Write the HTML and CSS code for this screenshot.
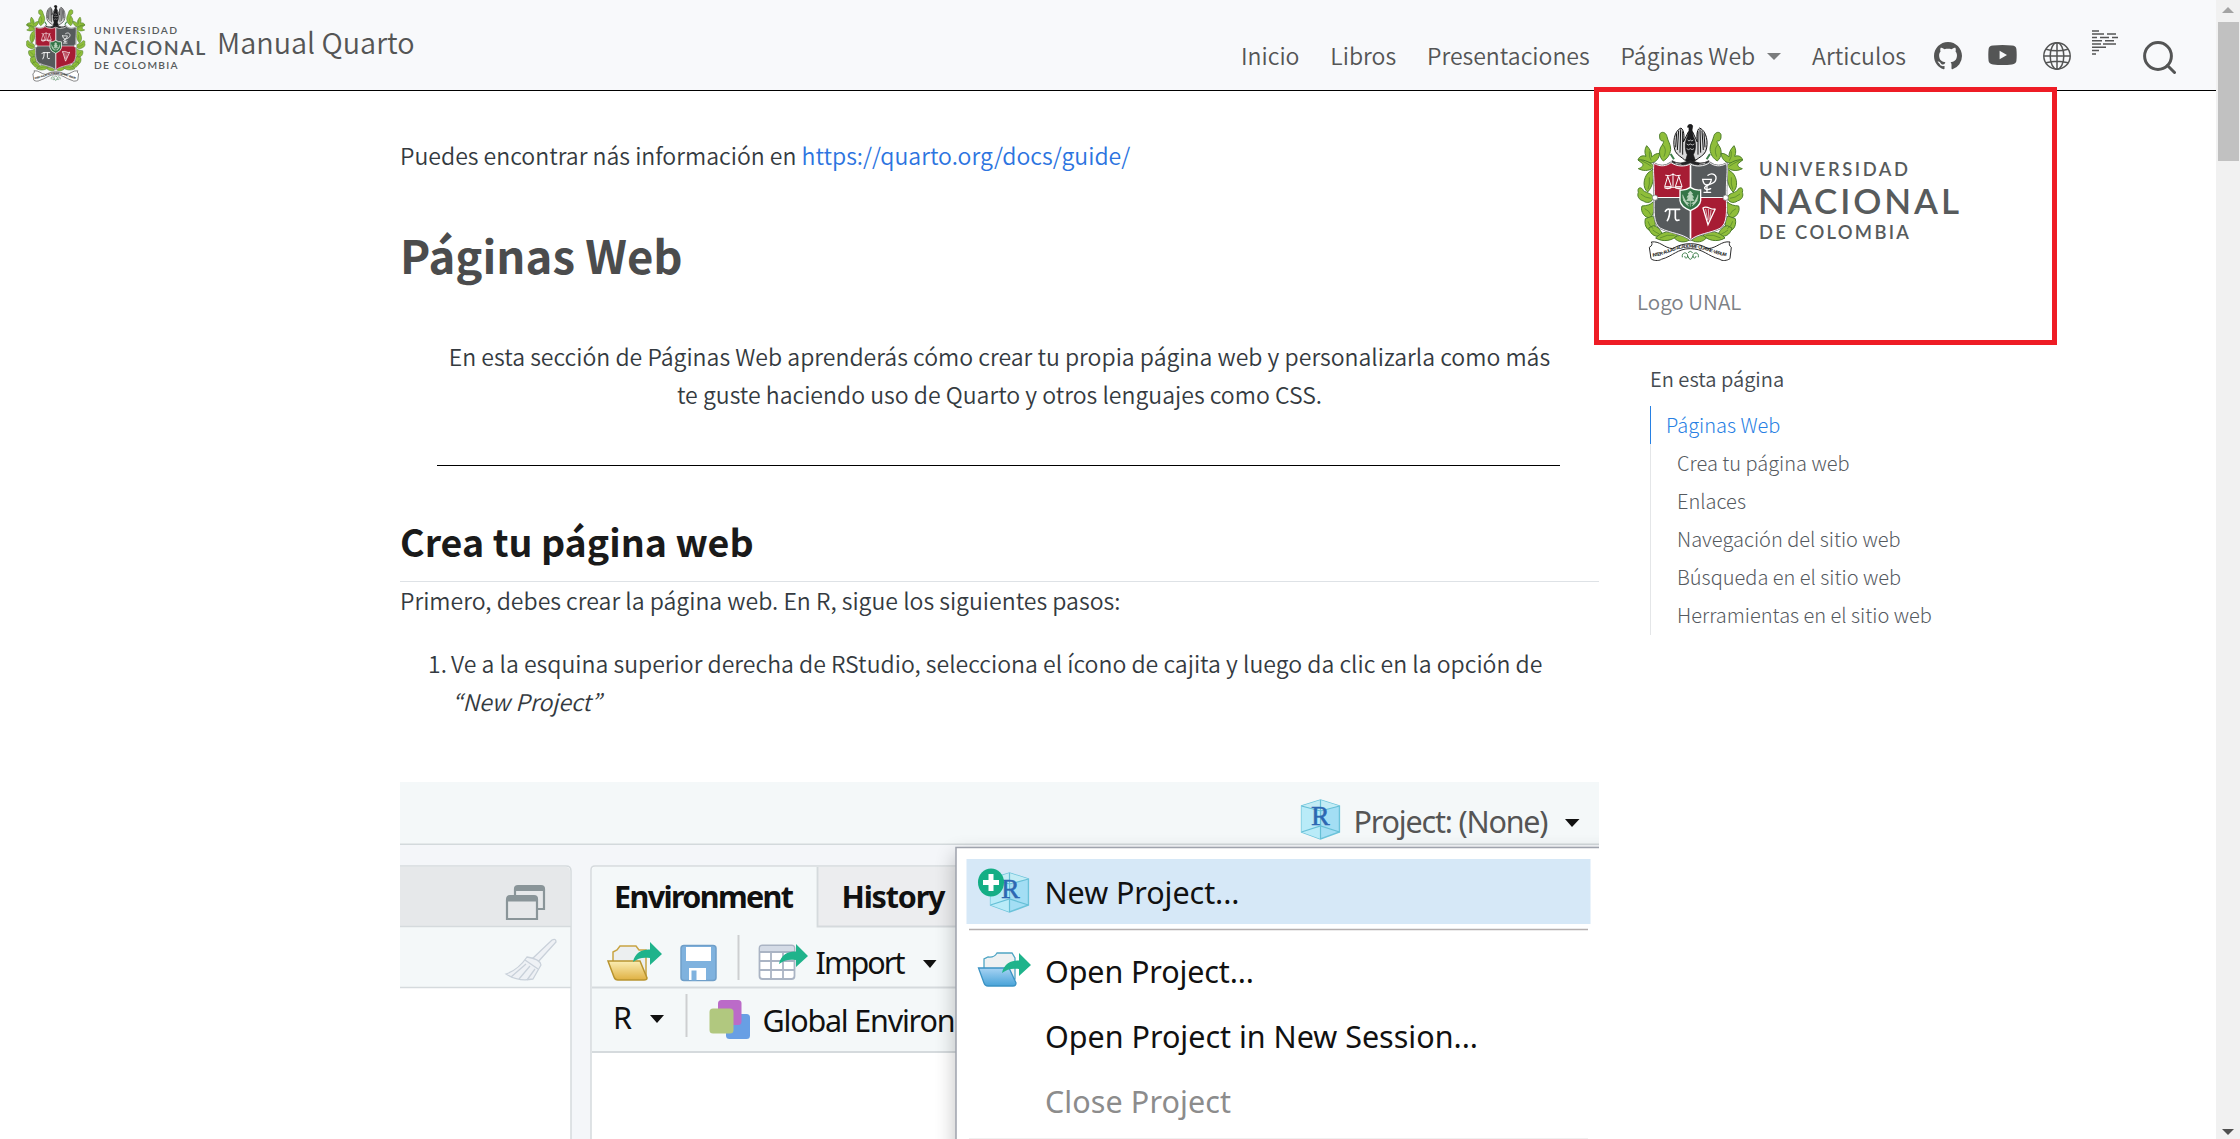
FILE: index.html
```html
<!DOCTYPE html>
<html lang="es">
<head>
<meta charset="utf-8">
<title>Manual Quarto</title>
<link rel="stylesheet" href="styles.css">
</head>
<body>
<svg class="defs" width="0" height="0" aria-hidden="true">
  <defs>
    <clipPath id="shield-clip"><path d="M102 160C122 172 140 168 153 158C170 170 195 171 211 162C227 171 252 170 269 158C282 168 300 172 320 160C324 185 318 205 319 262C320 305 322 342 300 355C270 370 235 370 211 390C187 370 152 370 122 355C100 342 102 305 103 262C104 205 98 185 102 160Z"/></clipPath>
    <g id="leaves" fill="#8fbe3a" stroke="#4d7d2b" stroke-width="3" stroke-linejoin="round">
      <path d="M119 78C117 64 137 62 141 80C144 95 152 102 152 118C150 136 142 145 130 153C116 140 115 120 126 106C132 97 132 90 128 93C122 94 118 86 119 78Z"/>
      <path d="M80 107C91 118 96 130 95 141C103 133 110 130 119 130C117 146 108 156 95 159C80 160 66 148 54 150C57 140 66 135 78 139C73 128 74 117 80 107Z"/>
      <path d="M54 150C75 147 96 160 103 171C86 186 66 182 55 176C65 173 71 168 68 161Z"/>
      <path d="M101 176C102 202 100 228 83 246C67 234 70 204 84 189Z"/>
      <path d="M55 247C50 230 66 230 70 242C82 250 97 250 99 263C98 278 80 281 70 273C55 269 51 257 55 247Z"/>
      <path d="M99 276C110 291 100 307 93 323C74 326 60 305 66 288C80 287 91 285 99 276Z"/>
      <path d="M98 318C109 330 104 346 106 361C89 370 70 352 76 326Z"/>
      <path d="M100 347C117 350 122 364 128 373C110 387 91 374 86 354Z"/>
      <path d="M107 384C125 364 152 360 174 374C160 392 130 398 107 384Z"/>
      <path d="M163 384C174 372 196 374 209 390C190 400 174 396 163 384Z"/>
      <path d="M128 104Q142 116 132 140M88 124Q86 142 94 152M64 152Q82 160 94 169M88 202Q90 224 84 238M62 252Q76 264 92 265M74 296Q88 302 92 314M84 334Q88 350 100 356M98 360Q108 368 118 372M120 384Q142 372 164 376" fill="none" stroke-width="2"/>
    </g>
    <symbol id="unal" viewBox="0 0 323 138">
      <g transform="scale(.3333) translate(-51 -42)">
        <use href="#leaves"/>
        <use href="#leaves" transform="translate(422 0) scale(-1 1)"/>
        <path d="M187 442C184 424 204 426 203 438C202 448 192 444 195 438M235 442C238 424 218 426 219 438C220 448 230 444 227 438M203 438Q211 458 219 438M204 428Q211 420 218 428" fill="none" stroke="#3d7f4a" stroke-width="3"/>
        <g stroke="#141414" fill="none">
          <path d="M183 54C163 62 156 98 166 124C172 136 186 142 194 150L228 150C238 142 252 136 257 124C267 98 259 62 239 54C229 60 230 84 232 96L218 66L205 66L190 96C194 80 192 60 183 54Z" fill="#d9d9da" stroke-width="3"/>
          <path d="M176 62L172 120M182 58L180 128M188 64L188 134M170 70L167 112M246 62L250 120M240 58L242 128M234 64L234 134M252 70L255 112" stroke-width="3"/>
          <path d="M203 52C202 42 215 40 218 48L216 60L220 80C229 96 228 120 220 134L226 152H197L202 134C194 120 194 96 202 80L207 62L207 52Z" fill="#1d1d1f" stroke-width="2"/>
          <path d="M203 90Q207 96 211 90Q216 96 220 90M200 102Q205 108 211 102Q217 108 223 102M200 116Q206 122 211 116Q216 122 222 116" stroke="#fff" stroke-width="2"/>
          <path d="M156 152Q182 168 211 148Q240 168 267 152L264 160Q240 176 211 160Q182 176 158 160Z" fill="#242426" stroke-width="2"/>
          <path d="M166 160L184 163M238 163L256 160" stroke="#fff" stroke-width="2"/>
        </g>
        <path d="M152 132L162 148M270 132L260 148" stroke="#3d7f4a" stroke-width="6"/>
        <path d="M102 160C122 172 140 168 153 158C170 170 195 171 211 162C227 171 252 170 269 158C282 168 300 172 320 160C324 185 318 205 319 262C320 305 322 342 300 355C270 370 235 370 211 390C187 370 152 370 122 355C100 342 102 305 103 262C104 205 98 185 102 160Z" fill="#fff" stroke="#6b6f70" stroke-width="6"/>
        <g clip-path="url(#shield-clip)">
          <rect x="90" y="150" width="119" height="111" fill="#a71c34"/>
          <rect x="214" y="150" width="119" height="111" fill="#565a5c"/>
          <rect x="90" y="264" width="119" height="135" fill="#565a5c"/>
          <rect x="214" y="264" width="119" height="135" fill="#a71c34"/>
        </g>
        <path d="M102 160C122 172 140 168 153 158C170 170 195 171 211 162C227 171 252 170 269 158C282 168 300 172 320 160C324 185 318 205 319 262C320 305 322 342 300 355C270 370 235 370 211 390C187 370 152 370 122 355C100 342 102 305 103 262C104 205 98 185 102 160Z" fill="none" stroke="#f4f4f4" stroke-width="3"/>
        <circle cx="105" cy="263" r="8" fill="#fff" stroke="#6b6f70" stroke-width="2"/>
        <circle cx="317" cy="263" r="8" fill="#fff" stroke="#6b6f70" stroke-width="2"/>
        <g fill="none" stroke="#fff" stroke-width="4" stroke-linecap="round">
          <path d="M137 196Q148 200 159 193Q170 200 181 196M159 191V229M150 232H168M143 200L134 230H153ZM176 200L166 230H185Z" stroke-width="3"/>
          <path d="M134 234Q143 240 153 234ZM166 234Q175 240 185 234Z" fill="#fff" stroke-width="2"/>
          <path d="M248 208H274Q272 224 261 225Q250 224 248 208ZM261 226V244M252 247H272"/>
          <path d="M264 196C278 186 292 196 287 210C282 224 262 222 254 232C252 240 266 240 272 236"/>
          <path d="M136 304Q140 296 148 298H179M149 298Q150 320 142 332M166 298V324Q167 334 177 330" stroke-width="5"/>
          <path d="M249 294L264 344L286 296C276 304 262 284 249 294Z"/>
          <path d="M257 298L263 330M265 298L267 330M273 301L270 326" stroke-width="2"/>
        </g>
        <path d="M180 240Q196 242 211 232Q226 242 242 240V272Q240 290 211 302Q182 290 180 272Z" fill="#347447" stroke="#fff" stroke-width="4"/>
        <path d="M211 243L218 252L214 252L221 262L216 262L222 272H200L206 262L201 262L208 252L204 252ZM211 272V290M190 270Q198 284 208 280M232 270Q224 284 214 280M188 254Q188 276 206 288M234 254Q234 276 216 288" fill="#b9d3bc" stroke="#b9d3bc" stroke-width="2"/>
        <path d="M94 396C120 392 132 414 158 416C190 396 232 396 264 416C292 414 304 392 330 396C326 402 328 408 334 412L330 446C322 452 306 454 300 448C262 438 250 416 211 416C172 416 160 438 124 448C116 454 98 452 93 446L88 412C96 408 98 402 94 396Z" fill="#fff" stroke="#2b2b2b" stroke-width="3"/>
        <path id="motto" d="M98 440C140 436 162 414 211 413C260 414 282 436 328 440" fill="none"/>
        <text class="motto"><textPath href="#motto" textLength="228">INTER · AULAS · ACADEMIÆ · QUÆRE · VERUM</textPath></text>
      </g>
      <g class="logo-words">
        <text x="122" y="52" font-size="18.4" textLength="149">UNIVERSIDAD</text>
        <text x="121" y="89.5" font-size="35" textLength="201">NACIONAL</text>
        <text x="122" y="115" font-size="18.4" textLength="150">DE COLOMBIA</text>
      </g>
    </symbol>
    <symbol id="cube" viewBox="0 0 40 41">
      <path d="M1 7L20 1L39 7V33L20 40L1 33Z" fill="#a3def4" stroke="#6cc3da" stroke-width="1.5"/>
      <path d="M1 7L20 12L39 7L20 1Z" fill="#c3ecf5"/><path d="M1 7L20 12V40L1 33Z" fill="#b9ebf8"/>
      <path d="M1 7L20 12L39 7M20 1V40M1 33L20 27L39 33" fill="none" stroke="#66bfd6" stroke-width="1.2"/>
    </symbol>
    <linearGradient id="gold" x2="0" y2="1"><stop stop-color="#fbedb4"/><stop offset="1" stop-color="#dfb142"/></linearGradient>
    <linearGradient id="azure" x2="0" y2="1"><stop stop-color="#a7d3f3"/><stop offset="1" stop-color="#48a3d8"/></linearGradient>
    <filter id="soft" x="-10%" y="-10%" width="120%" height="120%"><feGaussianBlur stdDeviation="10"/></filter>
  </defs>
</svg>

<div class="window">
  <div class="page">
    <header class="navbar">
      <a class="brand"><svg class="brand-logo" aria-label="Universidad Nacional de Colombia"><use href="#unal"/></svg><span class="brand-title">Manual Quarto</span></a>
      <nav class="menu">
        <a>Inicio</a><a>Libros</a><a>Presentaciones</a>
        <a>Páginas Web<i class="caret"></i></a><a>Articulos</a>
      </nav>
      <div class="tools">
        <svg class="i-github" viewBox="0 0 16 16"><path d="M8 0C3.58 0 0 3.58 0 8c0 3.54 2.29 6.53 5.47 7.59.4.07.55-.17.55-.38 0-.19-.01-.82-.01-1.49-2.01.37-2.53-.49-2.69-.94-.09-.23-.48-.94-.82-1.13-.28-.15-.68-.52-.01-.53.63-.01 1.08.58 1.23.82.72 1.21 1.87.87 2.33.66.07-.52.28-.87.51-1.07-1.78-.2-3.64-.89-3.64-3.95 0-.87.31-1.59.82-2.15-.08-.2-.36-1.02.08-2.12 0 0 .67-.21 2.2.82.64-.18 1.32-.27 2-.27s1.36.09 2 .27c1.53-1.04 2.2-.82 2.2-.82.44 1.1.16 1.92.08 2.12.51.56.82 1.27.82 2.15 0 3.07-1.87 3.75-3.65 3.95.29.25.54.73.54 1.48 0 1.07-.01 1.93-.01 2.2 0 .21.15.46.55.38A8.01 8.01 0 0 0 16 8c0-4.42-3.58-8-8-8"/></svg>
        <svg class="i-youtube" viewBox="0 0 29 20"><path fill-rule="evenodd" d="M5 .6Q14.500 -.4 24 .6Q28 .9 28.400 4Q29 10 28.400 16Q28 19 24 19.400Q14.500 20.400 5 19.400Q1 19 .6 16Q0 10 .6 4Q1 .9 5 .6ZM11.600 5.700V14.300L19 10Z"/></svg>
        <svg class="i-globe" viewBox="0 0 28 28"><g><circle cx="14" cy="14" r="13.200"/><ellipse cx="14" cy="14" rx="6.800" ry="13.200"/><path d="M14 1V27M1 14H27M3 7.200Q14 10.400 25 7.200M3 20.800Q14 17.600 25 20.800"/></g></svg>
        <svg class="i-prose" viewBox="0 0 26 25"><path d="M0 1H7M0 4.100H12M15 4.100H24M0 7.400H5M8 7.400H17M20 7.400H26M0 10.700H10M13 10.700H22M0 14H9M11 14H24M0 17.300H14M0 20.600H7M0 23.900H4"/></svg>
        <svg class="i-search" viewBox="0 0 33 33"><circle cx="15" cy="15" r="13.400"/><path d="M24.500 24.500L31.500 31.500"/></svg>
      </div>
    </header>

    <div class="content">
      <main>
        <p>Puedes encontrar nás información en <a class="link">https://quarto.org/docs/guide/</a></p>
        <h1>Páginas Web</h1>
        <div class="intro">En esta sección de Páginas Web aprenderás cómo crear tu propia página web y personalizarla como más<br>te guste haciendo uso de Quarto y otros lenguajes como CSS.</div>
        <hr>
        <h2>Crea tu página web</h2>
        <p class="step-intro">Primero, debes crear la página web. En R, sigue los siguientes pasos:</p>
        <ol><li><span class="num">1.</span><span>Ve a la esquina superior derecha de RStudio, selecciona el ícono de cajita y luego da clic en la opción de<br><em>“New Project”</em></span></li></ol>
        <svg class="figure" viewBox="0 0 1199 357" width="1199" height="357">
          <rect width="1199" height="357" fill="#f4f6f9"/>
          <rect width="1199" height="62" fill="#f4f8f9"/>
          <rect y="61.500" width="1199" height="1.500" fill="#d3d9dc"/>
          <path d="M-2 84H166Q171 84 171 89V360H-2Z" fill="#fff" stroke="#d5dadd" stroke-width="1.500"/>
          <path d="M0 85H166Q170 85 170 89V144H0Z" fill="#e6e8ea"/>
          <rect y="144" width="170" height="61" fill="#f4f8f9"/><path d="M0 144.500H171M0 205.500H171" stroke="#d5dadd" stroke-width="1.500"/>
          <g fill="none" stroke="#8a9599" stroke-width="2.200"><path d="M115 113V107Q115 104 118 104H141Q144 104 144 107V127H137"/><path d="M107 118Q107 114 110 114H134Q137 114 137 117V137H107Z"/><path d="M107 117H137M115 106.500H144" stroke-width="5"/></g>
          <g stroke="#c9d1da" fill="#eef1f5" stroke-width="1.300"><path d="M152 158Q156 156 156 160L137 181L132 177Z"/><path d="M127 175Q140 177 141 183L133 197Q118 200 106 192Q118 188 127 175Z"/><path d="M125 178L138 187M111 195L126 182M119 197L130 184M127 198L135 187" fill="none"/></g>
          <path d="M191 360V88Q191 84 195 84H600V360Z" fill="#fff" stroke="#d5dadd" stroke-width="1.500"/>
          <path d="M192 270V88Q192 85 195 85H600V270Z" fill="#f4f8f9"/>
          <path d="M418 85H600V144H418Z" fill="#ecedef"/>
          <path d="M417.500 85V144.500H600M192 205.500H600M192 270H600" fill="none" stroke="#d5dadd" stroke-width="1.800"/>
          <path d="M338.500 153V198M286.500 212V255" stroke="#cdcfd1" stroke-width="2"/>
          <path d="M213 186V170L217 168L220 164H236L239 168H246V195L240 197Z" fill="#eceff0" stroke="#c8a443" stroke-width="1.500"/>
          <path d="M208 179H240L247 196Q247 198 244 198H218Q215 198 214 195Z" fill="url(#gold)" stroke="#b8942f" stroke-width="1.500"/>
          <path id="go" d="M233 180C235 170 243 167 250 167.500V160L262 172L250 183V176C243 175 238 176 233 180Z" fill="#1fb38b"/>
          <rect x="281" y="163.500" width="35" height="35" rx="3" fill="#7fb2de" stroke="#6f9fc9" stroke-width="1.500"/><path d="M286 165H311V179H286ZM289 186H306V198H289Z" fill="#fff"/><rect x="291.500" y="188.500" width="5" height="10" fill="#7fb2de"/>
          <rect x="359.500" y="163.500" width="35" height="33.500" rx="3" fill="#fff" stroke="#aab4c4" stroke-width="1.800"/><path d="M360 166Q360 164 362 164H392Q394 164 394 166V169H360Z" fill="#d4dbe6"/><path d="M360 170H394M360 179H394M360 188H394M371 170V197M383 170V197" stroke="#aab4c4" stroke-width="1.800"/>
          <use href="#go" transform="translate(146 2)"/>
          <rect x="326" y="232" width="24" height="25" rx="3.500" fill="#689fe4"/><rect x="318" y="218" width="23.500" height="25" rx="3.500" fill="#bb6bc8"/><rect x="309.500" y="226.500" width="24" height="25" rx="3.500" fill="#b1c87f"/>
          <path d="M523 178H536.500L530 186ZM250 233H264L257 241Z" fill="#111"/>
          <g class="ide-text">
            <g font-weight="700"><text x="214" y="126" textLength="180">Environment</text><text x="441.500" y="126" textLength="104">History</text></g>
            <text x="415.500" y="192" textLength="90">Import</text><text x="213" y="247" textLength="19" lengthAdjust="spacingAndGlyphs">R</text><text x="362.500" y="250" textLength="193">Global Environ</text>
          </g>
          <rect x="554" y="72" width="700" height="340" fill="#000" opacity=".22" filter="url(#soft)"/>
          <path d="M556 360V65.500H1202V360Z" fill="#fff" stroke="#9fa3ad" stroke-width="1.500"/>
          <rect x="566.500" y="77" width="624" height="65" fill="#d6e8f7"/><path d="M569 147.500H1188" stroke="#b5afaf" stroke-width="1.500"/><path d="M569 356.500H1188" stroke="#f0f0f0"/>
          <use href="#cube" x="900.500" y="17" width="40" height="41"/><text class="cube-r" x="911" y="43">R</text>
          <use href="#cube" x="589.500" y="90" width="40" height="41"/><text class="cube-r" x="601" y="116">R</text>
          <ellipse cx="591" cy="100.500" rx="13" ry="14" fill="#14ae85"/><path d="M591 92V109M583 100.500H599" stroke="#fff" stroke-width="5"/>
          <path d="M584 192V177L588 175Q594 176 597 171H612L615 176V197Z" fill="#eef1f2" stroke="#4fa5c4" stroke-width="1.300"/>
          <path d="M578.500 186H609L616 201Q616 204 613 204H588Q585 204 584 201Z" fill="url(#azure)" stroke="#3b93c4" stroke-width="1.300"/>
          <use href="#go" transform="translate(369 11)"/>
          <g class="ide-text">
            <text x="953.500" y="51" textLength="195" class="soft">Project: (None)</text>
            <text x="644.500" y="122" textLength="195">New Project...</text><text x="645" y="201" textLength="209">Open Project...</text>
            <text x="645" y="266" textLength="433">Open Project in New Session...</text><text x="645" y="330.500" textLength="186" class="off">Close Project</text>
          </g>
          <path d="M1165 37H1179.500L1172 45Z" fill="#111"/>
        </svg>
      </main>
      <aside>
        <svg class="side-logo" aria-label="Universidad Nacional de Colombia"><use href="#unal"/></svg>
        <p class="caption">Logo UNAL</p>
        <nav class="toc">
          <h3>En esta página</h3>
          <ul><li class="active">Páginas Web</li><li>Crea tu página web</li><li>Enlaces</li><li>Navegación del sitio web</li><li>Búsqueda en el sitio web</li><li>Herramientas en el sitio web</li></ul>
        </nav>
      </aside>
    </div>
    <div class="highlight"></div>
  </div>
  <div class="scrollbar"><i class="up"></i><i class="thumb"></i><i class="down"></i></div>
</div>
</body>
</html>
```
FILE: styles.css
```css
* { box-sizing: border-box; }
body { margin: 0; background: #fff; font-family: "Noto Sans CJK SC", "Noto Sans", sans-serif; font-size: 23.05px; font-weight: 350; line-height: 38px; color: #343a40; }
h1, h2, h3, p, ul, ol { margin: 0; padding: 0; }
.defs { position: absolute; }
.window { display: flex; width: 2240px; height: 1139px; overflow: hidden; }
.page { position: relative; width: 2216px; height: 1139px; overflow: hidden; }

.navbar { display: flex; align-items: flex-start; height: 91px; padding-left: 26px; background: #f8f9fb; border-bottom: 1px solid #000; color: #545555; }
.brand { display: flex; width: 1215px; }
.brand-logo { width: 180px; height: 77px; margin-top: 5px; }
.brand-title { margin-left: 11px; margin-top: 20px; font-size: 28.8px; line-height: 44px; align-self: flex-start; }
.menu { display: flex; justify-content: space-between; width: 665px; margin-top: 36px; }
.menu a { white-space: nowrap; }
.caret { display: inline-block; margin-left: 12px; vertical-align: 5px; border: 7px solid transparent; border-top-color: #7b7d7e; border-bottom: 0; }
.tools { display: flex; margin-left: 28px; fill: #545555; }
.tools svg { flex: none; }
.i-github { width: 28px; height: 28px; margin-top: 42px; }
.i-youtube { width: 29px; height: 20px; margin: 45px 0 0 26px; }
.i-globe { width: 28px; height: 28px; margin: 42px 0 0 26px; }
.i-prose { width: 26px; height: 25px; margin: 30px 0 0 21px; }
.i-search { width: 33px; height: 33px; margin: 41px 0 0 25px; }
.i-globe, .i-prose, .i-search { fill: none; stroke: #545555; stroke-width: 1.5; }
.i-search { stroke-width: 3; stroke-linecap: round; }

.content { display: flex; padding-left: 400px; }
main { width: 1199px; padding-top: 45px; }
.link { color: #2c74e0; }
h1 { margin-top: 52px; font-size: 45.5px; line-height: 56px; font-weight: 700; color: #4b4c4d; }
.intro { margin-top: 55px; text-align: center; white-space: nowrap; }
hr { width: 1123px; height: 1px; margin: 52px 0 0 37px; border: 0; background: #000; }
h2 { margin-top: 53px; padding-bottom: 19px; font-size: 37.6px; line-height: 43px; font-weight: 700; color: #1a1a1a; border-bottom: 1px solid #dee2e6; }
.step-intro { line-height: 37px; }
ol { margin-top: 25px; padding-left: 28px; list-style: none; white-space: nowrap; }
ol li { display: flex; }
.num { width: 23px; }
em { font-family: "Noto Sans CJK KR", sans-serif; margin-left: 1px; }
.figure { display: block; margin-top: 62px; }

aside { width: 420px; margin-left: 38px; padding-top: 33px; }
.side-logo { display: block; width: 323px; height: 138px; }
.caption { margin-top: 21px; font-size: 20.6px; line-height: 36px; color: #7d8186; }
.toc { margin: 41px 0 0 13px; font-size: 20px; }
.toc h3 { font-size: 20.1px; line-height: 38px; font-weight: 350; color: #444a50; }
.toc ul { margin-top: 8px; list-style: none; }
.toc li { padding-left: 26px; line-height: 38.1px; font-weight: 300; color: #555a5f; border-left: 1px solid #e4e6e8; }
.toc .active { padding-left: 15px; color: #2780e3; border-left-color: #2780e3; }

.logo-words { font-family: Lato, sans-serif; font-weight: 600; fill: #575b5c; }
.motto { font: 700 14px "Liberation Sans", sans-serif; fill: #222; }
.ide-text { font-family: "Noto Sans", "Open Sans", sans-serif; font-size: 30.5px; font-weight: 400; fill: #111; }
.ide-text .soft { fill: #555; }
.ide-text .off { fill: #8c8c8c; }
.cube-r { font: 400 28px "Liberation Serif", serif; fill: #2d67b2; stroke: #2d67b2; stroke-width: .5; }

.highlight { position: absolute; left: 1594px; top: 87px; width: 463px; height: 258px; border: 5px solid #ee1c25; }

.scrollbar { display: flex; flex-direction: column; align-items: center; width: 24px; background: #f1f1f1; }
.up, .down { border: 6px solid transparent; }
.up { margin-top: 7px; border-top: 0; border-bottom-color: #a3a3a3; }
.thumb { width: 21px; height: 139px; margin-top: 9px; background: #c1c1c1; }
.down { margin-top: auto; margin-bottom: 4px; border-bottom: 0; border-top-color: #505050; }
```
